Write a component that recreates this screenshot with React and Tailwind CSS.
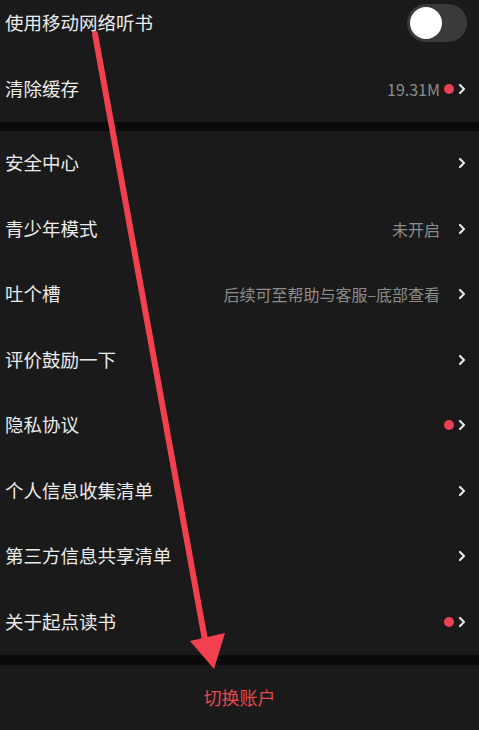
import React from "react";

const font = { fontFamily: '"Noto Sans CJK SC", "Noto Sans", sans-serif' };

function Chevron() {
  return (
    <svg width="8" height="12" viewBox="0 0 8 12" className="shrink-0">
      <path d="M2 2 L6 6 L2 10" fill="none" stroke="#e6e6e6" strokeWidth="2.2" strokeLinecap="round" strokeLinejoin="round" />
    </svg>
  );
}

function Row({ title, value, dot }) {
  return (
    <div className="flex h-[65.5px] items-center justify-between pl-[5px] pr-[13px]">
      <span className="text-[18.5px] text-[#ececec]">{title}</span>
      <div className="flex items-center">
        {value && <span className="text-[16px] text-[#8c8c8c]">{value}</span>}
        <span className={"ml-[4px] h-[10px] w-[10px] rounded-full " + (dot ? "bg-[#ec4152]" : "bg-transparent")} />
        <span className="ml-[4px]">
          <Chevron />
        </span>
      </div>
    </div>
  );
}

const items = [
  { title: "安全中心" },
  { title: "青少年模式", value: "未开启" },
  { title: "吐个槽", value: "后续可至帮助与客服–底部查看" },
  { title: "评价鼓励一下" },
  { title: "隐私协议", dot: true },
  { title: "个人信息收集清单" },
  { title: "第三方信息共享清单" },
  { title: "关于起点读书", dot: true },
];

export default function App() {
  return (
    <div className="relative h-[730px] w-[479px] overflow-hidden bg-[#1a1a1a]" style={font}>
      <div className="flex h-[56px] items-center justify-between pb-[10px] pl-[5px] pr-[12px]">
        <span className="text-[18.5px] text-[#ececec]">使用移动网络听书</span>
        <div className="flex h-[38px] w-[60px] items-center rounded-full bg-[#3a3a3c] px-[3px]">
          <div className="h-[32px] w-[32px] rounded-full bg-white" />
        </div>
      </div>
      <Row title="清除缓存" value="19.31M" dot />
      <div className="h-[9px] bg-[#0a0a0a]" />
      {items.map((it) => (
        <Row key={it.title} {...it} />
      ))}
      <div className="h-[10px] bg-[#0a0a0a]" />
      <div className="flex h-[65px] items-center justify-center">
        <span className="text-[18px] text-[#e5484f]">切换账户</span>
      </div>

      <svg className="pointer-events-none absolute left-0 top-0" width="479" height="730" viewBox="0 0 479 730">
        <line x1="95" y1="34" x2="205" y2="640" stroke="#f2404f" strokeWidth="6" strokeLinecap="round" />
        <polygon points="190,641 225,633 214,669" fill="#f2404f" />
      </svg>
    </div>
  );
}
